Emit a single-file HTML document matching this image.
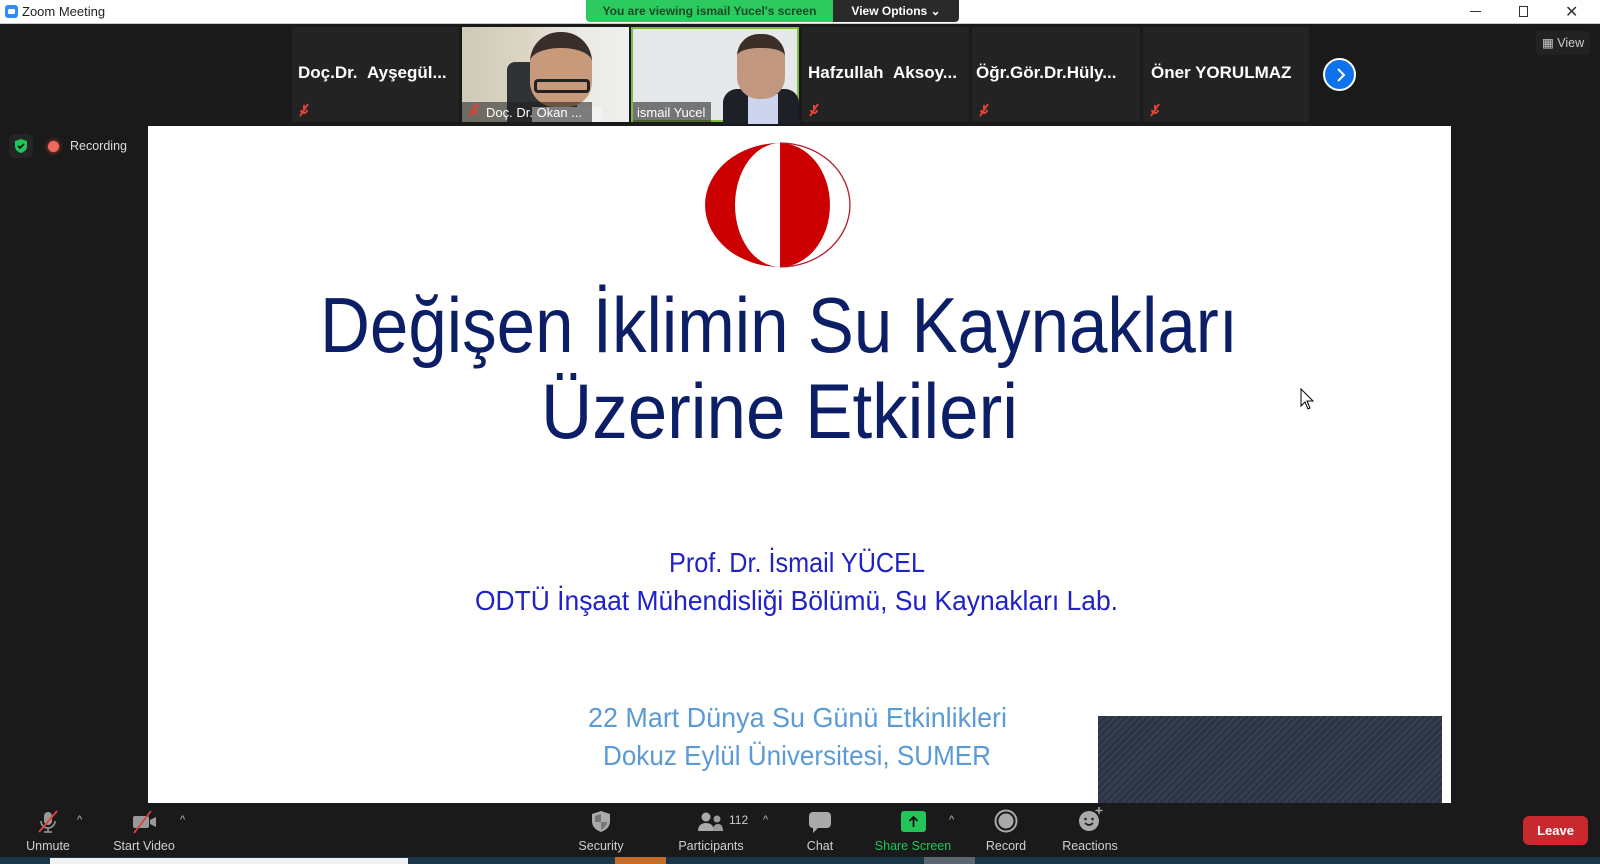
<!DOCTYPE html>
<html><head><meta charset="utf-8">
<style>
*{margin:0;padding:0;box-sizing:border-box}
body{width:1600px;height:864px;overflow:hidden;background:#1a1a1a;font-family:"Liberation Sans",sans-serif;position:relative}
.abs{position:absolute}
.title{left:0;top:0;width:1600px;height:24px;background:#fff;border-bottom:1px solid #ccc}
.title .t{left:22px;top:4px;font-size:13px;color:#222}
.banner{left:586px;top:0;width:247px;height:22px;background:#2dcb5f;color:#174c26;font-size:12px;font-weight:bold;text-align:center;line-height:22px;border-radius:0 0 0 4px}
.vo{left:833px;top:0;width:126px;height:22px;background:#2a2a2a;color:#fff;font-size:12px;font-weight:bold;text-align:center;line-height:22px;border-radius:0 0 4px 0}
.tile{top:27px;height:95px;background:#232323}
.nm{color:#fff;font-weight:bold;font-size:17px;white-space:nowrap;top:36px;left:6px}
.mute{bottom:4px;left:4px;width:16px;height:16px}
.lbl{color:#d0d0d0;font-size:12.5px;text-align:center;width:100px;top:839px}
</style></head><body>
<div class="abs title">
 <div class="abs" style="left:5px;top:5px;width:13px;height:13px;border-radius:3px;background:#2d8cff"><div class="abs" style="left:3px;top:4px;width:7px;height:5px;background:#fff;border-radius:1px"></div></div>
 <div class="abs t">Zoom Meeting</div>
 <div class="abs" style="left:1470px;top:11px;width:11px;height:1px;background:#333"></div>
 <div class="abs" style="left:1519px;top:6px;width:9px;height:11px;border:1px solid #333"></div>
 <div class="abs" style="left:1565px;top:2px;font-size:16px;color:#333">✕</div>
</div>
<div class="abs banner">You are viewing ismail Yucel's screen</div>
<div class="abs vo">View Options ⌄</div>

<div class="abs tile" style="left:292px;width:167px"><div class="abs nm">Doç.Dr. &nbsp;Ayşegül...</div><svg class="abs mute" viewBox="0 0 16 16"><path d="M4 14L12 2M8 3v6M5 8a3 3 0 006 0" stroke="#e0413a" stroke-width="2" fill="none"/></svg></div>
<div class="abs tile" style="left:462px;width:167px;background:linear-gradient(90deg,#cfc9b8 0,#ddd6c5 40%,#e9e9e5 70%,#f0f0ee)">
 <div class="abs" style="left:45px;top:35px;width:70px;height:60px;background:#303336;border-radius:8px 8px 0 0"></div>
 <div class="abs" style="left:68px;top:5px;width:62px;height:75px;background:#c79a7c;border-radius:30px 30px 25px 25px;border-top:16px solid #3a2e2a"></div>
 <div class="abs" style="left:72px;top:52px;width:56px;height:14px;border:3px solid #222;border-radius:4px"></div>
 <div class="abs" style="left:70px;top:80px;width:70px;height:15px;background:#f2f2f2"></div>
 <div class="abs" style="left:0;top:75px;width:130px;height:20px;background:rgba(30,30,30,.55)"></div>
 <div class="abs" style="left:24px;top:78px;color:#fff;font-size:13px;white-space:nowrap">Doç. Dr. Okan ...</div>
 <svg class="abs mute" viewBox="0 0 16 16"><path d="M4 14L12 2M8 3v6M5 8a3 3 0 006 0" stroke="#e0413a" stroke-width="2" fill="none"/></svg>
</div>
<div class="abs tile" style="left:631px;width:168px;background:#e6e8ea;border:2px solid #7dbb43">
 <div class="abs" style="left:90px;top:60px;width:76px;height:35px;background:#1e2028;border-radius:14px 14px 0 0"></div>
 <div class="abs" style="left:115px;top:65px;width:30px;height:30px;background:#cdd5ee"></div>
 <div class="abs" style="left:104px;top:5px;width:48px;height:65px;background:#c29780;border-radius:22px 22px 22px 22px;border-top:14px solid #3c2f2a"></div>
 <div class="abs" style="left:0;top:73px;width:78px;height:20px;background:rgba(40,40,40,.6)"></div>
 <div class="abs" style="left:4px;top:76px;color:#fff;font-size:13px">ismail Yucel</div>
</div>
<div class="abs tile" style="left:802px;width:167px"><div class="abs nm">Hafzullah &nbsp;Aksoy...</div><svg class="abs mute" viewBox="0 0 16 16"><path d="M4 14L12 2M8 3v6M5 8a3 3 0 006 0" stroke="#e0413a" stroke-width="2" fill="none"/></svg></div>
<div class="abs tile" style="left:972px;width:168px"><div class="abs nm" style="left:4px">Öğr.Gör.Dr.Hüly...</div><svg class="abs mute" viewBox="0 0 16 16"><path d="M4 14L12 2M8 3v6M5 8a3 3 0 006 0" stroke="#e0413a" stroke-width="2" fill="none"/></svg></div>
<div class="abs tile" style="left:1143px;width:166px"><div class="abs nm" style="left:8px">Öner YORULMAZ</div><svg class="abs mute" viewBox="0 0 16 16"><path d="M4 14L12 2M8 3v6M5 8a3 3 0 006 0" stroke="#e0413a" stroke-width="2" fill="none"/></svg></div>
<div class="abs" style="left:1323px;top:58px;width:33px;height:33px;border-radius:50%;background:#0e72ed;border:2px solid #fff"><svg class="abs" style="left:8px;top:7px" width="14" height="16" viewBox="0 0 14 16"><path d="M5 2l6 6-6 6" stroke="#fff" stroke-width="2" fill="none"/></svg></div>
<div class="abs" style="left:1536px;top:31px;width:54px;height:24px;background:#222;border-radius:4px;color:#ccc;font-size:12.5px;line-height:24px;padding-left:6px">▦ View</div>

<div class="abs" style="left:9px;top:134px;width:24px;height:24px;background:#252525;border-radius:6px"><svg class="abs" style="left:5px;top:4px" width="14" height="16" viewBox="0 0 14 16"><path d="M7 1L1 3v5c0 4 3 6 6 7 3-1 6-3 6-7V3z" fill="#23c55a"/><path d="M4 8l2 2 4-4" stroke="#111" stroke-width="1.6" fill="none"/></svg></div>
<div class="abs" style="left:48px;top:141px;width:11px;height:11px;border-radius:50%;background:#f06a5a;box-shadow:0 0 5px #e2493b"></div>
<div class="abs" style="left:70px;top:139px;color:#ddd;font-size:12.5px">Recording</div>

<svg class="abs" style="left:148px;top:126px" width="1303" height="677" viewBox="148 126 1303 677">
 <rect x="148" y="126" width="1303" height="677" fill="#fff"/>
 <path d="M780 143 A75 62 0 0 0 780 267 Z" fill="#cc0000"/>
 <path d="M780 143 A45 62 0 0 0 780 267 Z" fill="#fff"/>
 <path d="M780 143 A50 62 0 0 1 780 267 Z" fill="#cc0000"/>
 <path d="M780 143 A70 62 0 0 1 780 267" fill="none" stroke="#b02030" stroke-width="1.3"/>
 <g font-family="Liberation Sans, sans-serif" text-anchor="start">
 <text x="320" y="352" font-size="78" fill="#0c1f66" textLength="918" lengthAdjust="spacingAndGlyphs">Değişen İklimin Su Kaynakları</text>
 <text x="541" y="438" font-size="78" fill="#0c1f66" textLength="477" lengthAdjust="spacingAndGlyphs">Üzerine Etkileri</text>
 <text x="669" y="572" font-size="28" fill="#1f22c4" textLength="256" lengthAdjust="spacingAndGlyphs">Prof. Dr. İsmail YÜCEL</text>
 <text x="475" y="610" font-size="28" fill="#1f22c4" textLength="643" lengthAdjust="spacingAndGlyphs">ODTÜ İnşaat Mühendisliği Bölümü, Su Kaynakları Lab.</text>
 <text x="588" y="727" font-size="28" fill="#5b9bd5" textLength="419" lengthAdjust="spacingAndGlyphs">22 Mart Dünya Su Günü Etkinlikleri</text>
 <text x="603" y="765" font-size="28" fill="#5b9bd5" textLength="388" lengthAdjust="spacingAndGlyphs">Dokuz Eylül Üniversitesi, SUMER</text>
 </g>
 <defs><pattern id="st" width="5" height="5" patternUnits="userSpaceOnUse" patternTransform="rotate(45)"><rect width="5" height="5" fill="#2a3444"/><rect width="2" height="5" fill="#36404f"/></pattern></defs>
 <rect x="1098" y="716" width="344" height="87" fill="url(#st)"/>
 <path d="M1301 389v17l4-4 3 7 2-1-3-7h6z" fill="#fff" stroke="#000" stroke-width="1"/>
</svg>

<svg class="abs" style="left:36px;top:810px" width="24" height="24" viewBox="0 0 24 24"><rect x="8" y="2" width="8" height="13" rx="4" fill="#999"/><path d="M5 11a7 7 0 0014 0M12 18v4M8 22h8" stroke="#999" stroke-width="1.6" fill="none"/><path d="M3 22L21 1" stroke="#e0413a" stroke-width="1.8"/></svg>
<div class="abs" style="left:77px;top:814px;color:#bbb;font-size:11px">^</div>
<div class="abs lbl" style="left:-2px">Unmute</div>
<svg class="abs" style="left:131px;top:810px" width="28" height="24" viewBox="0 0 28 24"><rect x="2" y="6" width="16" height="12" rx="2" fill="#999"/><path d="M19 10l6-3v10l-6-3z" fill="#999"/><path d="M3 23L20 1" stroke="#e0413a" stroke-width="1.8"/></svg>
<div class="abs" style="left:180px;top:814px;color:#bbb;font-size:11px">^</div>
<div class="abs lbl" style="left:94px">Start Video</div>
<svg class="abs" style="left:591px;top:810px" width="20" height="24" viewBox="0 0 20 24"><path d="M10 1L1 4v7c0 6 4 9 9 11 5-2 9-5 9-11V4z" fill="#aaa"/><path d="M10 4L4 6v6h6z" fill="#777"/><path d="M10 12h6c0 4-3 6-6 8z" fill="#777"/></svg>
<div class="abs lbl" style="left:551px">Security</div>
<svg class="abs" style="left:697px;top:812px" width="28" height="20" viewBox="0 0 28 20"><circle cx="9" cy="5" r="4.5" fill="#aaa"/><path d="M1 19c0-6 4-8 8-8s8 2 8 8z" fill="#aaa"/><circle cx="20" cy="7" r="3.5" fill="#999"/><path d="M16 19c0-5 2-7 5-7s5 2 5 7z" fill="#999"/></svg>
<div class="abs" style="left:729px;top:813px;color:#ccc;font-size:12px">112</div>
<div class="abs" style="left:763px;top:814px;color:#bbb;font-size:11px">^</div>
<div class="abs lbl" style="left:661px">Participants</div>
<svg class="abs" style="left:808px;top:810px" width="24" height="24" viewBox="0 0 24 24"><rect x="1" y="2" width="22" height="16" rx="4" fill="#aaa"/><path d="M5 16v7l6-6z" fill="#aaa"/></svg>
<div class="abs lbl" style="left:770px">Chat</div>
<div class="abs" style="left:901px;top:811px;width:25px;height:21px;background:#23c55a;border-radius:3px"><svg class="abs" style="left:7px;top:4px" width="11" height="13" viewBox="0 0 11 13"><path d="M5.5 12V2M1.5 6l4-4 4 4" stroke="#111" stroke-width="1.8" fill="none"/></svg></div>
<div class="abs" style="left:949px;top:814px;color:#bbb;font-size:11px">^</div>
<div class="abs lbl" style="left:863px;color:#23c55a">Share Screen</div>
<svg class="abs" style="left:994px;top:809px" width="24" height="24" viewBox="0 0 24 24"><circle cx="12" cy="12" r="10.5" fill="none" stroke="#aaa" stroke-width="2"/><circle cx="12" cy="12" r="7.5" fill="#aaa"/></svg>
<div class="abs lbl" style="left:956px">Record</div>
<svg class="abs" style="left:1078px;top:806px" width="28" height="28" viewBox="0 0 28 28"><circle cx="11" cy="15" r="10" fill="#aaa"/><circle cx="7.5" cy="13" r="1.3" fill="#222"/><circle cx="14.5" cy="13" r="1.3" fill="#222"/><path d="M7 17q4 4 8 0" stroke="#222" stroke-width="1.6" fill="none"/><path d="M21 1v7M17.5 4.5h7" stroke="#aaa" stroke-width="1.5"/></svg>
<div class="abs lbl" style="left:1040px">Reactions</div>
<div class="abs" style="left:1523px;top:816px;width:65px;height:29px;background:#c8292f;border-radius:6px;color:#fff;font-weight:bold;font-size:13px;text-align:center;line-height:29px">Leave</div>

<div class="abs" style="left:0;top:857px;width:1600px;height:7px;background:#1a3648"></div>
<div class="abs" style="left:50px;top:858px;width:358px;height:6px;background:#f2f2f2"></div>
<div class="abs" style="left:615px;top:857px;width:51px;height:7px;background:#c66d2a"></div>
<div class="abs" style="left:924px;top:857px;width:51px;height:7px;background:#5a6570"></div>
</body></html>
